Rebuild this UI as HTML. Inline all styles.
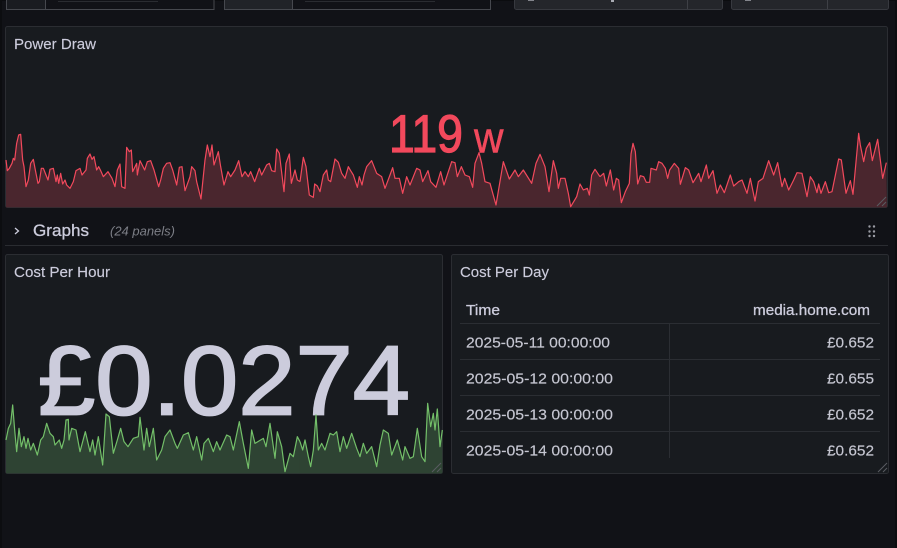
<!DOCTYPE html>
<html>
<head>
<meta charset="utf-8">
<style>
html,body{margin:0;padding:0;background:#111217;width:897px;height:548px;overflow:hidden}
svg{display:block}
text{font-family:"Liberation Sans",sans-serif;fill:#ccccdc;stroke:#ccccdc;stroke-width:.15px}
.r{stroke:#f2495c;stroke-width:3.6;fill:none;stroke-linejoin:round}
.g{stroke:#73bf69;stroke-width:3.6;fill:none;stroke-linejoin:round}
.rf{fill:#4a262e;stroke:none}
.gf{fill:#2e4333;stroke:none}
.b{fill:#181b1f;stroke:#2b2d32;stroke-width:1}
.t{font-size:15px}
.d{font-size:15px;fill:#c6c7d2;stroke:#c6c7d2}
.h{stroke:#5a5c62;stroke-width:1;fill:none}
.l{stroke:#2b2e33;stroke-width:1}
</style>
</head>
<body>
<svg width="897" height="548" viewBox="0 0 897 548">
<rect width="897" height="548" fill="#111217"/>
<rect x="0" y="0" width="897" height="1" fill="#0b0c0f"/>
<rect x="0" y="0" width="2" height="548" fill="#0c0d10"/>
<rect x="895" y="0" width="2" height="548" fill="#0c0d10"/>

<!-- top controls -->
<rect x="6.5" y="-4" width="39" height="13.5" fill="#1a1c21" stroke="#46484e"/>
<rect x="45.5" y="-4" width="168.5" height="13.5" fill="#111217" stroke="#46484e"/>
<rect x="58" y="1" width="100" height="1" fill="#2a2c31"/>
<rect x="224.5" y="-4" width="68" height="13.5" fill="#212328" stroke="#46484e"/>
<rect x="292.5" y="-4" width="198" height="13.5" fill="#111217" stroke="#46484e"/>
<rect x="305" y="1" width="130" height="1" fill="#2a2c31"/>
<rect x="514.5" y="-4" width="208" height="13.5" rx="2" fill="#24262b" stroke="#37393f"/>
<line x1="687.5" y1="0" x2="687.5" y2="9" stroke="#3e4046"/>
<rect x="731.5" y="-4" width="157" height="13.5" rx="2" fill="#24262b" stroke="#37393f"/>
<line x1="827.5" y1="0" x2="827.5" y2="9" stroke="#3e4046"/>
<rect x="528" y="0" width="6" height="1" fill="#83858c"/>
<rect x="611" y="0" width="3" height="2" fill="#a9abb3"/>
<rect x="745" y="0" width="6" height="1" fill="#83858c"/>

<!-- Power Draw panel -->
<rect class="b" x="5.5" y="26.5" width="882" height="181" rx="2"/>
<text class="t" x="14" y="49" textLength="82" lengthAdjust="spacingAndGlyphs">Power Draw</text>

<g transform="translate(0,0) scale(.33333)">
<polygon class="rf" points="18,622 18,480 22,512 28,505 36,490 40,475 44,480 50,430 56,405 62,403 68,480 72,500 78,560 85,540 92,490 100,478 106,510 114,550 118,545 124,505 130,505 138,525 144,540 150,508 160,505 168,545 172,525 176,550 182,520 188,552 195,540 200,555 210,565 220,545 228,512 240,505 246,525 258,510 262,475 270,462 276,478 282,470 290,510 296,500 302,512 310,530 324,515 336,535 345,560 352,510 360,492 365,560 375,565 380,442 388,455 394,450 398,515 410,490 412,525 420,482 434,510 442,485 452,482 462,510 476,560 482,540 490,505 500,490 510,488 518,510 530,555 538,502 546,500 555,572 570,530 575,500 585,512 590,545 603,597 615,480 622,435 630,470 636,435 642,495 655,455 662,500 672,555 684,515 692,530 705,510 716,482 726,530 735,515 745,530 752,515 764,545 778,505 785,525 800,495 808,490 815,512 825,515 830,447 838,460 852,575 858,490 868,462 874,550 885,510 892,540 900,545 900,622"/>
<polyline class="r" points="18,480 22,512 28,505 36,490 40,475 44,480 50,430 56,405 62,403 68,480 72,500 78,560 85,540 92,490 100,478 106,510 114,550 118,545 124,505 130,505 138,525 144,540 150,508 160,505 168,545 172,525 176,550 182,520 188,552 195,540 200,555 210,565 220,545 228,512 240,505 246,525 258,510 262,475 270,462 276,478 282,470 290,510 296,500 302,512 310,530 324,515 336,535 345,560 352,510 360,492 365,560 375,565 380,442 388,455 394,450 398,515 410,490 412,525 420,482 434,510 442,485 452,482 462,510 476,560 482,540 490,505 500,490 510,488 518,510 530,555 538,502 546,500 555,572 570,530 575,500 585,512 590,545 603,597 615,480 622,435 630,470 636,435 642,495 655,455 662,500 672,555 684,515 692,530 705,510 716,482 726,530 735,515 745,530 752,515 764,545 778,505 785,525 800,495 808,490 815,512 825,515 830,447 838,460 852,575 858,490 868,462 874,550 885,510 892,540 900,545"/>
</g>
<g transform="translate(300,0) scale(.33333)">
<polygon class="rf" points="0,622 0,545 10,472 18,500 28,585 40,592 44,552 52,558 60,575 70,525 80,510 85,540 92,545 105,477 115,487 125,520 135,535 145,500 152,512 160,525 172,562 178,530 186,555 192,525 200,500 215,482 230,520 245,530 255,565 270,525 278,503 285,535 298,535 308,580 320,530 330,555 350,505 360,510 368,545 384,512 392,545 408,562 422,515 432,555 445,515 455,485 465,488 472,530 484,500 495,525 508,530 518,562 525,490 537,458 545,490 555,545 570,550 588,615 610,485 628,537 645,510 655,530 670,510 695,550 708,490 720,463 735,500 747,575 760,482 770,520 775,565 782,535 795,535 805,580 812,620 830,590 840,552 850,570 862,565 868,585 875,525 885,508 900,530 900,622"/>
<polyline class="r" points="0,545 10,472 18,500 28,585 40,592 44,552 52,558 60,575 70,525 80,510 85,540 92,545 105,477 115,487 125,520 135,535 145,500 152,512 160,525 172,562 178,530 186,555 192,525 200,500 215,482 230,520 245,530 255,565 270,525 278,503 285,535 298,535 308,580 320,530 330,555 350,505 360,510 368,545 384,512 392,545 408,562 422,515 432,555 445,515 455,485 465,488 472,530 484,500 495,525 508,530 518,562 525,490 537,458 545,490 555,545 570,550 588,615 610,485 628,537 645,510 655,530 670,510 695,550 708,490 720,463 735,500 747,575 760,482 770,520 775,565 782,535 795,535 805,580 812,620 830,590 840,552 850,570 862,565 868,585 875,525 885,508 900,530"/>
</g>
<g transform="translate(597,0) scale(.33333)">
<polygon class="rf" points="9,622 9,530 20,520 28,558 40,510 50,570 58,535 65,540 73,608 85,575 97,550 102,462 108,430 115,455 122,552 130,527 140,530 148,547 158,547 162,505 178,510 185,485 195,490 205,505 212,535 218,510 232,490 245,505 250,553 265,503 275,510 288,548 305,520 312,545 328,495 335,535 348,512 360,580 370,555 382,578 400,525 410,558 425,545 435,540 450,580 460,535 474,603 484,545 498,535 515,482 530,525 542,488 555,560 563,535 575,570 590,540 600,518 615,520 630,590 640,530 650,545 660,578 665,552 672,580 685,545 695,578 705,575 725,477 733,480 747,580 752,565 760,542 768,583 785,400 790,435 800,485 808,445 818,428 826,482 842,418 857,535 868,488 870,622"/>
<polyline class="r" points="9,530 20,520 28,558 40,510 50,570 58,535 65,540 73,608 85,575 97,550 102,462 108,430 115,455 122,552 130,527 140,530 148,547 158,547 162,505 178,510 185,485 195,490 205,505 212,535 218,510 232,490 245,505 250,553 265,503 275,510 288,548 305,520 312,545 328,495 335,535 348,512 360,580 370,555 382,578 400,525 410,558 425,545 435,540 450,580 460,535 474,603 484,545 498,535 515,482 530,525 542,488 555,560 563,535 575,570 590,540 600,518 615,520 630,590 640,530 650,545 660,578 665,552 672,580 685,545 695,578 705,575 725,477 733,480 747,580 752,565 760,542 768,583 785,400 790,435 800,485 808,445 818,428 826,482 842,418 857,535 868,488"/>
</g>
<text x="389" y="152" font-size="53" textLength="74" lengthAdjust="spacingAndGlyphs" style="fill:#f2495c;stroke:#f2495c;stroke-width:1.2px">119</text>
<text x="474" y="152.5" font-size="44" textLength="29.5" lengthAdjust="spacingAndGlyphs" style="fill:#f2495c;stroke:#f2495c;stroke-width:.5px">w</text>
<path class="h" d="M877 206L886 197M882 206L886 202"/>

<!-- row -->
<path d="M15 228L18.5 231L15 234" fill="none" stroke="#ccccdc" stroke-width="1.3"/>
<text x="33" y="236" font-size="17" textLength="56" lengthAdjust="spacingAndGlyphs" style="stroke-width:.3px">Graphs</text>
<text x="110" y="235.5" font-size="13" font-style="italic" textLength="65" lengthAdjust="spacingAndGlyphs" style="fill:#7d7f87;stroke:none">(24 panels)</text>
<g fill="#9a9ba3">
<circle cx="869.5" cy="226.5" r="1.2"/><circle cx="874" cy="226.5" r="1.2"/>
<circle cx="869.5" cy="231.5" r="1.2"/><circle cx="874" cy="231.5" r="1.2"/>
<circle cx="869.5" cy="236" r="1.2"/><circle cx="874" cy="236" r="1.2"/>
</g>
<line x1="5" y1="245.5" x2="888" y2="245.5" stroke="#2a2c31"/>

<!-- Cost Per Hour -->
<rect class="b" x="5.5" y="254.500" width="437" height="219" rx="2"/>
<text class="t" x="14" y="277" textLength="96" lengthAdjust="spacingAndGlyphs">Cost Per Hour</text>
<text x="38" y="414.5" font-size="98" textLength="372" lengthAdjust="spacingAndGlyphs" style="stroke-width:1.8px">£0.0274</text>

<g transform="translate(0,210) scale(.33333)">
<polygon class="gf" points="18,790 18,690 25,655 32,640 38,585 44,660 50,725 57,655 64,710 72,680 78,715 84,685 92,720 100,700 112,735 122,690 130,680 140,640 150,670 160,680 165,705 178,690 185,715 192,690 198,630 205,628 207,690 215,655 228,660 240,725 256,665 270,725 278,690 285,735 295,680 308,765 318,612 328,620 340,730 352,690 362,655 372,695 384,710 400,685 415,680 420,622 432,720 440,655 448,710 460,655 470,750 485,720 495,680 510,660 525,700 532,715 550,675 565,668 580,720 590,680 605,750 612,700 625,685 640,725 650,695 660,720 680,675 690,680 700,720 718,635 730,700 745,775 755,660 765,700 790,685 798,710 810,640 825,745 832,665 845,710 855,785 870,730 880,740 892,680 900,695 900,790"/>
<polyline class="g" points="18,690 25,655 32,640 38,585 44,660 50,725 57,655 64,710 72,680 78,715 84,685 92,720 100,700 112,735 122,690 130,680 140,640 150,670 160,680 165,705 178,690 185,715 192,690 198,630 205,628 207,690 215,655 228,660 240,725 256,665 270,725 278,690 285,735 295,680 308,765 318,612 328,620 340,730 352,690 362,655 372,695 384,710 400,685 415,680 420,622 432,720 440,655 448,710 460,655 470,750 485,720 495,680 510,660 525,700 532,715 550,675 565,668 580,720 590,680 605,750 612,700 625,685 640,725 650,695 660,720 680,675 690,680 700,720 718,635 730,700 745,775 755,660 765,700 790,685 798,710 810,640 825,745 832,665 845,710 855,785 870,730 880,740 892,680 900,695"/>
</g>
<g transform="translate(300,210) scale(.33333)">
<polygon class="gf" points="0,790 0,695 8,720 15,690 25,740 32,770 40,720 48,615 55,720 65,700 75,720 90,670 100,675 110,665 120,725 130,680 140,715 155,670 170,715 180,740 190,700 200,730 215,710 230,770 240,705 250,660 265,670 275,735 292,690 308,750 315,710 330,745 340,740 352,655 365,740 375,755 383,580 392,650 400,610 405,660 412,597 420,710 427,660 427,790"/>
<polyline class="g" points="0,695 8,720 15,690 25,740 32,770 40,720 48,615 55,720 65,700 75,720 90,670 100,675 110,665 120,725 130,680 140,715 155,670 170,715 180,740 190,700 200,730 215,710 230,770 240,705 250,660 265,670 275,735 292,690 308,750 315,710 330,745 340,740 352,655 365,740 375,755 383,580 392,650 400,610 405,660 412,597 420,710 427,660"/>
</g>
<path class="h" d="M432 472L441 463M437 472L441 468"/>

<!-- Cost Per Day -->
<rect class="b" x="451.5" y="254.500" width="437" height="219" rx="2"/>
<text class="t" x="460" y="277" textLength="89" lengthAdjust="spacingAndGlyphs">Cost Per Day</text>
<text x="466" y="315" font-size="15" textLength="34" lengthAdjust="spacingAndGlyphs" style="stroke-width:.3px">Time</text>
<text x="753" y="315" font-size="15" textLength="117" lengthAdjust="spacingAndGlyphs" style="stroke-width:.3px">media.home.com</text>
<line class="l" x1="460" y1="323.5" x2="880" y2="323.5"/>
<line class="l" x1="460" y1="359.5" x2="880" y2="359.5"/>
<line class="l" x1="460" y1="395.5" x2="880" y2="395.5"/>
<line class="l" x1="460" y1="431.5" x2="880" y2="431.5"/>
<line class="l" x1="669.5" y1="324" x2="669.5" y2="458"/>
<text class="d" x="466" y="347.5" textLength="144" lengthAdjust="spacingAndGlyphs">2025-05-11 00:00:00</text>
<text class="d" x="466" y="383.5" textLength="147" lengthAdjust="spacingAndGlyphs">2025-05-12 00:00:00</text>
<text class="d" x="466" y="419.5" textLength="147" lengthAdjust="spacingAndGlyphs">2025-05-13 00:00:00</text>
<text class="d" x="466" y="455.5" textLength="147" lengthAdjust="spacingAndGlyphs">2025-05-14 00:00:00</text>
<text class="d" x="827" y="347.5" textLength="47" lengthAdjust="spacingAndGlyphs">£0.652</text>
<text class="d" x="827" y="383.5" textLength="47" lengthAdjust="spacingAndGlyphs">£0.655</text>
<text class="d" x="827" y="419.5" textLength="47" lengthAdjust="spacingAndGlyphs">£0.652</text>
<text class="d" x="827" y="455.5" textLength="47" lengthAdjust="spacingAndGlyphs">£0.652</text>
<path class="h" d="M878 472L887 463M883 472L887 468"/>
</svg>
</body>
</html>
